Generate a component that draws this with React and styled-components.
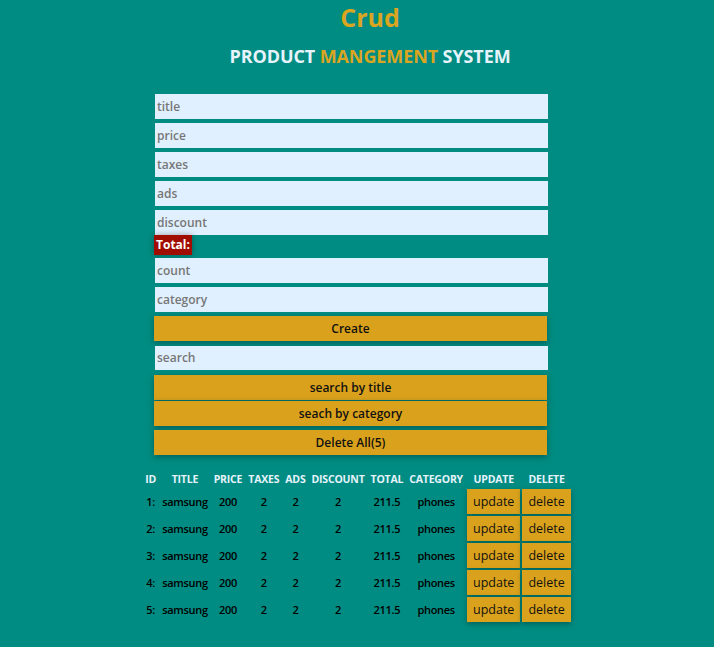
import React from 'react';
import styled, { createGlobalStyle } from 'styled-components';

const products = [1, 2, 3, 4, 5].map((id) => ({
  id,
  title: 'samsung',
  price: 200,
  taxes: 2,
  ads: 2,
  discount: 2,
  total: 211.5,
  category: 'phones',
}));

const fields = ['title', 'price', 'taxes', 'ads', 'discount'];

export default function App() {
  return (
    <Page>
      <GlobalStyle />
      <Header>
        <Title>Crud</Title>
        <Subtitle>
          PRODUCT <Accent>MANGEMENT</Accent> SYSTEM
        </Subtitle>
      </Header>
      <Form>
        {fields.map((f) => (
          <Input key={f} placeholder={f} />
        ))}
        <Total>Total:</Total>
        <Input placeholder="count" />
        <Input placeholder="category" />
        <Button>Create</Button>
        <Input placeholder="search" />
        <Button $tight>search by title</Button>
        <Button>seach by category</Button>
        <Button>Delete All(5)</Button>
      </Form>
      <Table>
        <thead>
          <tr>
            <Th>ID</Th>
            <Th>TITLE</Th>
            <Th>PRICE</Th>
            <Th>TAXES</Th>
            <Th>ADS</Th>
            <Th>DISCOUNT</Th>
            <Th>TOTAL</Th>
            <Th>CATEGORY</Th>
            <Th>UPDATE</Th>
            <Th>DELETE</Th>
          </tr>
        </thead>
        <tbody>
          {products.map((p) => (
            <tr key={p.id}>
              <Td>{p.id}:</Td>
              <Td>{p.title}</Td>
              <Td>{p.price}</Td>
              <Td>{p.taxes}</Td>
              <Td>{p.ads}</Td>
              <Td>{p.discount}</Td>
              <Td>{p.total}</Td>
              <Td>{p.category}</Td>
              <Td>
                <RowButton>update</RowButton>
              </Td>
              <Td>
                <RowButton>delete</RowButton>
              </Td>
            </tr>
          ))}
        </tbody>
      </Table>
    </Page>
  );
}

const GlobalStyle = createGlobalStyle`
  * { box-sizing: border-box; }
  html, body {
    margin: 0;
    background: #008c82;
    font-family: "Open Sans", "Noto Sans", sans-serif;
  }
`;

const Page = styled.div`
  min-height: 647px;
  padding-top: 1px;
`;

const Header = styled.header`
  display: flex;
  flex-direction: column;
  align-items: center;
  padding-left: 26px;
`;

const Title = styled.h1`
  margin: 0;
  font-size: 25px;
  line-height: 32px;
  font-weight: 700;
  color: #daa520;
`;

const Subtitle = styled.h2`
  margin: 12px 0 0;
  font-size: 18px;
  line-height: 22px;
  font-weight: 700;
  letter-spacing: -0.1px;
  color: #e6f3fb;
`;

const Accent = styled.span`
  color: #daa520;
`;

const Form = styled.div`
  display: flex;
  flex-direction: column;
  align-items: flex-start;
  gap: 4.5px;
  width: 394px;
  margin: 27px 0 0 154px;
`;

const Input = styled.input`
  width: 393px;
  height: 24.5px;
  margin-left: 1px;
  border: none;
  outline: none;
  padding: 0 2px;
  background: #e1f0fe;
  font-family: inherit;
  font-size: 12px;
  font-weight: 600;
  color: #333;

  &::placeholder {
    color: #777;
  }
`;

const Total = styled.div`
  height: 20px;
  padding: 0 2px;
  margin: -4px 0 -1.5px;
  background: #a00d00;
  color: #fff;
  font-size: 12px;
  font-weight: 700;
  line-height: 20px;
  box-shadow: 0 0 6px rgba(0, 0, 0, 0.35);
`;

const Button = styled.button`
  width: 393px;
  height: 25px;
  border: none;
  margin-bottom: ${(p) => (p.$tight ? '-3.5px' : '0')};
  background: #daa21c;
  color: #111;
  font-family: inherit;
  font-size: 12px;
  font-weight: 600;
  box-shadow: 0 2px 6px rgba(0, 60, 55, 0.55);
  cursor: pointer;
`;

const Table = styled.table`
  margin: 14px auto 0;
  border-spacing: 2px;
  text-align: center;
`;

const Th = styled.th`
  padding: 1px 2px;
  color: #e6f3fb;
  font-size: 10.5px;
  font-weight: 700;
  letter-spacing: -0.2px;
`;

const Td = styled.td`
  padding: 0 2px;
  color: #000;
  font-size: 11px;
  font-weight: 600;
  letter-spacing: -0.3px;

  &:nth-last-child(-n + 2) {
    padding: 0;
  }
`;

const RowButton = styled.button`
  height: 25px;
  padding: 0 6px;
  border: none;
  background: #daa21c;
  color: #111;
  font-family: inherit;
  font-size: 12.5px;
  box-shadow: 0 2px 5px rgba(0, 60, 55, 0.55);
  cursor: pointer;
`;
